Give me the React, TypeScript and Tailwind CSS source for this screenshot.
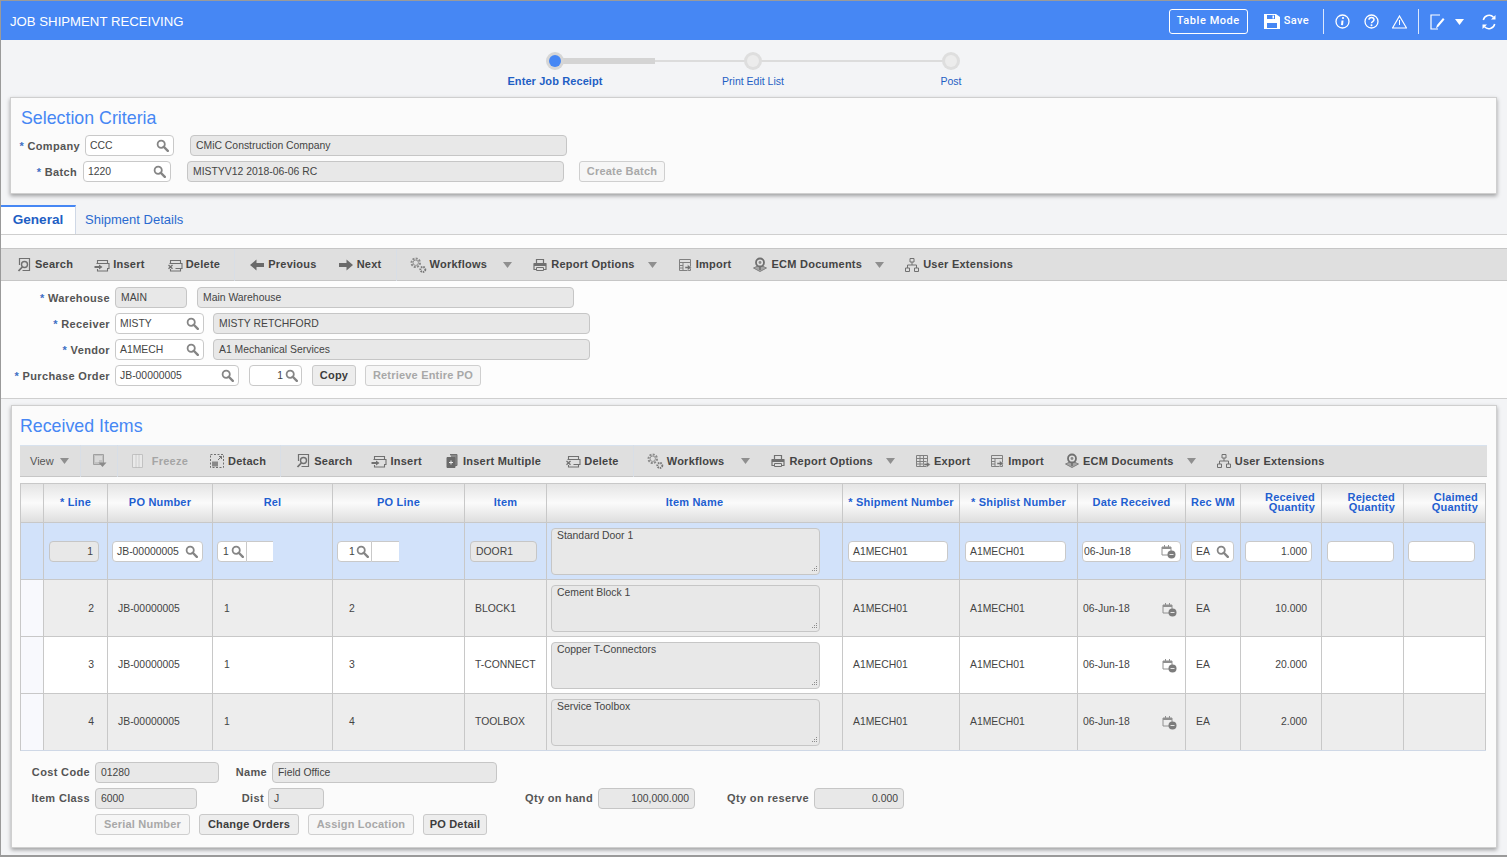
import type { ReactNode } from "react";

const ic = "shrink-0";

function Mag({ className = "" }: { className?: string }) {
  return (
    <svg width="13" height="13" viewBox="0 0 13 13" fill="none" stroke="#858585" className={`${ic} ${className}`}>
      <circle cx="5.2" cy="5.2" r="3.6" strokeWidth="1.8" />
      <path d="M8 8l3.8 3.8" strokeWidth="2.4" strokeLinecap="round" />
    </svg>
  );
}

function Caret({ light = false }: { light?: boolean }) {
  return (
    <svg width="9" height="6" viewBox="0 0 9 6" className={ic}>
      <path d="M0 0h9L4.5 6z" fill={light ? "#ffffff" : "#8f8f8f"} />
    </svg>
  );
}

function Tool({ children, size = 16 }: { children: ReactNode; size?: number }) {
  return (
    <svg width={size} height={size} viewBox="0 0 16 16" fill="none" stroke="#707070" strokeWidth="1" className={ic}>
      {children}
    </svg>
  );
}

const toolIcons: Record<string, ReactNode> = {
  search: (
    <>
      <path d="M3.5 8V1.500h10v12h-7" strokeWidth="1.200" />
      <circle cx="8.500" cy="7.500" r="3" strokeWidth="1.400" />
      <path d="M6.300 10l-3.800 4" strokeWidth="1.800" />
    </>
  ),
  insert: (
    <>
      <path d="M3.500 6V3.500h10V6M2.500 6.500h12.500v5h-2M3.500 12v2h10v-2" strokeWidth="1.100" />
      <path d="M0.500 10h6" strokeWidth="2" />
      <path d="M5 7.500L8.500 10 5 12.500z" fill="#707070" stroke="none" />
    </>
  ),
  del: (
    <>
      <path d="M3.500 6V3.500h10V6M2.500 6.500h12.500v5H8.500M3.500 12v2h10v-2" strokeWidth="1.100" />
      <path d="M1.500 8l4 3.800M5.500 8l-4 3.800" strokeWidth="1.300" />
    </>
  ),
  prev: <path d="M1 8l6.500-5.500V6H15v4H7.500v3.500z" fill="#6a6a6a" stroke="none" />,
  next: <path d="M15 8L8.500 2.500V6H1v4h7.500v3.500z" fill="#6a6a6a" stroke="none" />,
  workflows: (
    <>
      <circle cx="6" cy="6" r="3.800" stroke="#8a8a8a" strokeWidth="1.800" strokeDasharray="1.800 1.100" />
      <circle cx="6" cy="6" r="2.400" stroke="#8a8a8a" strokeWidth="0.800" />
      <circle cx="12.300" cy="12" r="2.200" stroke="#777" strokeWidth="1.700" strokeDasharray="1.300 0.800" />
    </>
  ),
  report: (
    <>
      <path d="M4.500 6V2.500h7V6" strokeWidth="1.200" />
      <path d="M2 6.500h12v6H2z" fill="#dfdfdf" strokeWidth="1.200" strokeLinejoin="round" />
      <path d="M2 8h12" strokeWidth="2" />
      <path d="M4.500 10.500h7v3h-7z" fill="#dfdfdf" />
    </>
  ),
  import: (
    <>
      <path d="M2.500 2.500h11v11h-11z" stroke="#808080" />
      <path d="M2.500 5.500h11M6 5.500v8M2.500 8.500h3.500M2.500 11h3.500" stroke="#808080" />
      <path d="M8 9.500h2.500V7.500l4 3-4 3v-2H8z" fill="#707070" stroke="#dfdfdf" strokeWidth="0.500" />
    </>
  ),
  ecm: (
    <>
      <path d="M1.500 11l6.500-3 6.500 3-6.500 3.500z" fill="#a5a5a5" stroke="#808080" />
      <circle cx="8" cy="5.500" r="4" fill="#dfdfdf" stroke="#6f6f6f" strokeWidth="1.800" />
      <circle cx="8" cy="5.500" r="1.400" fill="#888" stroke="none" />
      <path d="M8 9.500v3.500" strokeWidth="1.600" />
    </>
  ),
  user: (
    <>
      <path d="M6 1.500h4v3.500H6zM1.500 11h4v3.500h-4zM10.500 11h4v3.500h-4z" />
      <path d="M8 5v3M3.500 11V8h9v3" />
    </>
  ),
  filter: (
    <>
      <path d="M2.500 1.500h10v10h-10z" fill="#c2c2c2" stroke="#a0a0a0" />
      <path d="M4 4h7M4 6h7M4 8h4" stroke="#eee" />
      <path d="M7.500 9.500h8l-4 4.500z" fill="#8a8a8a" stroke="none" />
    </>
  ),
  freeze: (
    <>
      <path d="M2.500 1.500h10v13h-10z" stroke="#c2c2c2" fill="#e9e9e9" />
      <path d="M6 1.500v13M9 1.500v13" stroke="#b5b5b5" strokeDasharray="1 1" />
    </>
  ),
  detach: (
    <>
      <path d="M1.500 1.500h13v13h-13z" strokeDasharray="2 1.500" />
      <path d="M3 8.500h6v5H3z" fill="#8a8a8a" stroke="none" />
      <path d="M9 7l3.500-3.500M10 3.500h2.500V6" />
    </>
  ),
  multiple: (
    <>
      <path d="M6 1.500h7v11h-2" fill="#8a8a8a" />
      <path d="M3 4.500h8v10H3z" fill="#6a6a6a" stroke="#6a6a6a" />
      <path d="M7 7.500v4M5 9.500h4" stroke="#eee" />
    </>
  ),
  export: (
    <>
      <path d="M1.500 2.500h11v11h-11z" stroke="#808080" />
      <path d="M1.500 5.500h11M5 2.500v11M8.500 2.500v11M1.500 8.500h11M1.500 11h11" stroke="#808080" />
      <path d="M9 10.500h2.500V8.500l4 3-4 3v-2H9z" fill="#707070" stroke="#dfdfdf" strokeWidth="0.500" />
    </>
  ),
};

function ToolItem({
  icon,
  label,
  className = "",
  off = false,
  wide = false,
}: {
  icon: string;
  label: string;
  className?: string;
  off?: boolean;
  wide?: boolean;
}) {
  return (
    <div className={`flex items-center ${wide ? "gap-[6px]" : "gap-[3px]"} ${className}`}>
      <Tool size={icon === "workflows" ? 18 : 16}>{toolIcons[icon]}</Tool>
      <span className={`text-[11px] font-bold tracking-[0.25px] ${off ? "text-[#a5a5a5]" : "text-[#444]"}`}>{label}</span>
    </div>
  );
}

function Sep({ className = "" }: { className?: string }) {
  return <div className={`h-[32px] w-px bg-[#d8dee6] ${className}`} />;
}

function Field({
  value = "",
  w,
  gray = false,
  mag = false,
  right = false,
}: {
  value?: string;
  w: string;
  gray?: boolean;
  mag?: boolean;
  right?: boolean;
}) {
  return (
    <div
      className={`flex h-[21px] shrink-0 items-center rounded-[4px] border text-[10.4px] text-[#444] ${w} ${
        gray ? "border-[#c6c6c6] bg-[#e8e8e8] px-[5px]" : "border-[#c9c9c9] bg-white px-[4px]"
      } ${right ? "justify-end" : ""}`}
    >
      <span className={mag ? "flex-1 whitespace-nowrap" : "whitespace-nowrap"}>{value}</span>
      {mag && <Mag />}
    </div>
  );
}

function Label({ text, w, req = false }: { text: string; w: string; req?: boolean }) {
  return (
    <div className={`shrink-0 whitespace-nowrap text-right text-[11px] font-bold tracking-[0.35px] text-[#555] ${w}`}>
      {req && <span className="text-[#3f6fc4]">* </span>}
      {text}
    </div>
  );
}

function Btn({ text, w, off = false }: { text: string; w: string; off?: boolean }) {
  return (
    <div
      className={`flex h-[21px] shrink-0 items-center justify-center rounded-[3px] border text-[11px] font-bold tracking-[0.2px] ${w} ${
        off ? "border-[#cfcfcf] bg-[#f6f6f6] text-[#a8a8a8]" : "border-[#c9c9c9] bg-[#ededed] text-[#3c3c3c]"
      }`}
    >
      {text}
    </div>
  );
}

function CalClock() {
  return (
    <svg width="15" height="15" viewBox="0 0 15 15" className={ic}>
      <path d="M1 3h9v8H1z" fill="none" stroke="#909090" />
      <path d="M1 3h9v2H1zM3 1h1v2.500H3zM7 1h1v2.500H7z" fill="#909090" />
      <circle cx="10.500" cy="10.500" r="4" fill="#7c7c7c" />
      <path d="M8.500 10.500h4" fill="none" stroke="#e6e6e6" />
    </svg>
  );
}

function NameBox({ text }: { text: string }) {
  return (
    <div className="relative ml-[4px] h-[47px] w-[269px] rounded-[4px] border border-[#c6c6c6] bg-[#e8e8e8] px-[5px] text-[10.4px] leading-[13px] text-[#444]">
      {text}
      <svg width="8" height="8" viewBox="0 0 8 8" className="absolute bottom-[1px] right-[1px]">
        <path d="M6 1h1v1H6zM4 3h1v1H4zM6 3h1v1H6zM2 5h1v1H2zM4 5h1v1H4zM6 5h1v1H6z" fill="#8c8c8c" />
      </svg>
    </div>
  );
}

const cols =
  "grid grid-cols-[23px_64px_105px_120px_132px_82px_296px_117px_118px_108px_55px_81px_82px_82px]";
const cell = "flex items-center border-r border-[#c8c8c8]";

const headers: { t: string; c?: string }[] = [
  { t: "" },
  { t: "* Line" },
  { t: "PO Number" },
  { t: "Rel" },
  { t: "PO Line" },
  { t: "Item" },
  { t: "Item Name" },
  { t: "* Shipment Number" },
  { t: "* Shiplist Number" },
  { t: "Date Received" },
  { t: "Rec WM" },
  { t: "Received Quantity", c: "justify-end pr-[6px] text-right" },
  { t: "Rejected Quantity", c: "justify-end pr-[8px] text-right" },
  { t: "Claimed Quantity", c: "justify-end pr-[7px] text-right" },
];

const rows = [
  { line: "2", item: "BLOCK1", name: "Cement Block 1", qty: "10.000", bg: "bg-[#ededed] [&>div]:pt-[2px]" },
  { line: "3", item: "T-CONNECT", name: "Copper T-Connectors", qty: "20.000", bg: "bg-white" },
  { line: "4", item: "TOOLBOX", name: "Service Toolbox", qty: "2.000", bg: "bg-[#ededed]" },
];

export default function App() {
  return (
    <div className="flex h-[857px] w-[1507px] flex-col overflow-hidden border-b-2 border-l border-t border-[#9a9a9a] bg-[#f3f4f6] font-['Liberation_Sans',Arial,sans-serif]">
      {/* header */}
      <div className="flex h-[39px] shrink-0 items-center bg-[#4687f4] pl-[9px] pt-[2px] text-white">
        <div className="text-[13.2px]">JOB SHIPMENT RECEIVING</div>
        <div className="ml-auto flex items-center pr-[10px]">
          <div className="flex h-[25px] w-[79px] items-center justify-center rounded-[3px] border border-white font-['Roboto',sans-serif] text-[11px] font-medium tracking-[0.55px]">
            Table Mode
          </div>
          <svg width="16" height="15" viewBox="0 0 16 15" className="ml-[16px]">
            <path d="M0 0h12l4 3v12H0z" fill="#fff" />
            <path d="M3 1h8v4H3z" fill="#4687f4" />
            <path d="M8.500 1.500h1.500v3H8.500z" fill="#fff" />
            <path d="M3 9h10v5H3z" fill="#4687f4" />
          </svg>
          <span className="ml-[4px] font-['Roboto',sans-serif] text-[11px] font-medium tracking-[0.35px]">Save</span>
          <div className="ml-[14px] h-[25px] w-px bg-white/80" />
          <svg width="15" height="15" viewBox="0 0 15 15" className="ml-[11px]" fill="none" stroke="#fff">
            <circle cx="7.500" cy="7.500" r="6.500" strokeWidth="1.300" />
            <path d="M7.500 6.500L7 11.200" strokeWidth="2" />
            <circle cx="8" cy="4" r="1.100" fill="#fff" stroke="none" />
          </svg>
          <svg width="15" height="15" viewBox="0 0 15 15" className="ml-[14px]" fill="none" stroke="#fff">
            <circle cx="7.500" cy="7.500" r="6.500" strokeWidth="1.300" />
            <path d="M5 5.800c0-3.200 5-3.200 5 0 0 1.800-2.500 1.700-2.500 3.400" strokeWidth="1.500" />
            <circle cx="7.500" cy="11.200" r="1" fill="#fff" stroke="none" />
          </svg>
          <svg width="15" height="14" viewBox="0 0 15 14" className="ml-[13px]" fill="none" stroke="#fff">
            <path d="M7.500 1L14.500 13H.5z" strokeWidth="1.200" />
            <path d="M7.500 5v5" strokeWidth="1" />
          </svg>
          <div className="ml-[11px] h-[25px] w-px bg-white/80" />
          <svg width="15" height="16" viewBox="0 0 15 16" className="ml-[11px]" fill="none" stroke="#fff">
            <path d="M10 1H1v14h7" strokeWidth="1.200" />
            <path d="M6 14.500l1-3.500 6-7 1.500 1.500-6 7z" fill="#fff" stroke="none" />
          </svg>
          <div className="ml-[10px]">
            <Caret light />
          </div>
          <svg width="16" height="16" viewBox="0 0 16 16" className="ml-[17px]" fill="none" stroke="#fff" strokeWidth="1.500">
            <path d="M2.300 6A6 6 0 0 1 12.500 3.200M13.700 10A6 6 0 0 1 3.500 12.800" />
            <path d="M14.500 1v4.500H10z M1.500 15v-4.500H6z" fill="#fff" stroke="none" />
          </svg>
        </div>
      </div>

      {/* train stops */}
      <div className="flex h-[57px] shrink-0 justify-center pr-[2px] pt-[12px]">
        <div className="relative flex w-[594px] justify-between">
          <div className="absolute left-[99px] right-[99px] top-[8px] h-[2px] bg-[#dcdcdc]" />
          <div className="absolute left-[99px] top-[6px] h-[6px] w-[100px] bg-[#d4d4d4]" />
          {[
            { t: "Enter Job Receipt", on: true },
            { t: "Print Edit List", on: false },
            { t: "Post", on: false },
          ].map((s) => (
            <div key={s.t} className="relative flex w-[198px] flex-col items-center">
              <div
                className={`flex h-[18px] w-[18px] items-center justify-center rounded-full ${
                  s.on ? "bg-[#d6d6d6]" : "bg-[#dedede]"
                }`}
              >
                <div className={`h-[12px] w-[12px] rounded-full ${s.on ? "bg-[#4687f4]" : "bg-[#ececec]"}`} />
              </div>
              <div className={`text-[#1f5fc4] ${s.on ? "mt-[3px] text-[11px] font-bold tracking-[0.1px]" : "mt-[4px] text-[10.5px]"}`}>
                {s.t}
              </div>
            </div>
          ))}
        </div>
      </div>

      {/* selection criteria */}
      <div className="ml-[9px] mr-[10px] h-[97px] shrink-0 border border-[#cfcfcf] bg-[#fbfbfb] shadow-[0_2px_4px_rgba(0,0,0,0.35)]">
        <div className="pl-[10px] pt-[10px] text-[17.8px] leading-[21px] text-[#4687f4]">Selection Criteria</div>
        <div className="mt-[6px] flex items-center">
          <Label text="Company" w="w-[69px] pt-[2px]" req />
          <div className="ml-[5px]">
            <Field w="w-[89px]" value="CCC" mag />
          </div>
          <div className="ml-[16px]">
            <Field w="w-[377px]" value="CMiC Construction Company" gray />
          </div>
        </div>
        <div className="mt-[5px] flex items-center">
          <Label text="Batch" w="w-[66px] pt-[2px]" req />
          <div className="ml-[6px]">
            <Field w="w-[88px]" value="1220" mag />
          </div>
          <div className="ml-[16px]">
            <Field w="w-[377px]" value="MISTYV12 2018-06-06 RC" gray />
          </div>
          <Btn text="Create Batch" w="ml-[15px] w-[86px]" off />
        </div>
      </div>

      {/* tabs */}
      <div className="mt-[11px] flex h-[30px] shrink-0 border-b border-[#cfcfcf]">
        <div className="flex w-[75px] items-center justify-center border-r border-t-2 border-r-[#cfd8e6] border-t-[#4687f4] bg-white text-[13.6px] font-bold text-[#1f5fc4]">
          General
        </div>
        <div className="ml-[9px] flex items-center text-[13px] text-[#2a6ad0]">Shipment Details</div>
      </div>

      {/* general tab */}
      <div className="h-[164px] shrink-0 border-b border-[#cfcfcf] bg-[#fdfdfd] pt-[13px]">
        <div className="flex h-[33px] items-center border-y border-[#c6c6c6] bg-[#dfdfdf] pl-[15px]">
          <ToolItem icon="search" label="Search" />
          <ToolItem icon="insert" label="Insert" className="ml-[21px]" />
          <ToolItem icon="del" label="Delete" className="ml-[22px]" />
          <Sep className="ml-[14px]" />
          <ToolItem icon="prev" label="Previous" className="ml-[14px]" />
          <ToolItem icon="next" label="Next" className="ml-[21px]" />
          <Sep className="ml-[14px]" />
          <ToolItem icon="workflows" label="Workflows" className="ml-[12px]" />
          <div className="ml-[16px]">
            <Caret />
          </div>
          <ToolItem icon="report" label="Report Options" className="ml-[20px]" />
          <div className="ml-[13px]">
            <Caret />
          </div>
          <ToolItem icon="import" label="Import" className="ml-[20px]" />
          <ToolItem icon="ecm" label="ECM Documents" className="ml-[21px]" />
          <div className="ml-[13px]">
            <Caret />
          </div>
          <ToolItem icon="user" label="User Extensions" className="ml-[20px]" />
        </div>
        <div className="flex flex-col gap-[5px] pt-[6px]">
          <div className="flex items-center gap-[5px]">
            <Label text="Warehouse" w="w-[109px] pt-[2px]" req />
            <Field w="w-[72px]" value="MAIN" gray />
            <div className="ml-[5px]">
              <Field w="w-[377px]" value="Main Warehouse" gray />
            </div>
          </div>
          <div className="flex items-center gap-[5px]">
            <Label text="Receiver" w="w-[109px] pt-[2px]" req />
            <Field w="w-[89px]" value="MISTY" mag />
            <div className="ml-[4px]">
              <Field w="w-[377px]" value="MISTY RETCHFORD" gray />
            </div>
          </div>
          <div className="flex items-center gap-[5px]">
            <Label text="Vendor" w="w-[109px] pt-[2px]" req />
            <Field w="w-[89px]" value="A1MECH" mag />
            <div className="ml-[4px]">
              <Field w="w-[377px]" value="A1 Mechanical Services" gray />
            </div>
          </div>
          <div className="flex items-center gap-[5px]">
            <Label text="Purchase Order" w="w-[109px] pt-[2px]" req />
            <Field w="w-[124px]" value="JB-00000005" mag />
            <div className="ml-[5px] flex h-[21px] w-[53px] items-center justify-end gap-[2px] rounded-[4px] border border-[#c9c9c9] bg-white pr-[3px] text-[10.4px] text-[#444]">
              1
              <Mag />
            </div>
            <Btn text="Copy" w="ml-[5px] w-[44px]" />
            <Btn text="Retrieve Entire PO" w="ml-[4px] w-[116px]" off />
          </div>
        </div>
      </div>

      {/* received items */}
      <div className="ml-[10px] mr-[10px] mt-[6px] h-[443px] shrink-0 border border-[#cfcfcf] bg-[#fbfbfb] pl-[8px] pr-[9px] shadow-[0_2px_4px_rgba(0,0,0,0.35)]">
        <div className="pt-[10px] text-[17.8px] leading-[21px] text-[#4687f4]">Received Items</div>
        <div className="mt-[8px] flex h-[32px] items-center border-b border-t border-b-[#c6c6c6] border-t-[#d8e2ee] bg-[#dfdfdf] pl-[10px]">
          <span className="text-[11px] text-[#555]">View</span>
          <div className="ml-[6px]">
            <Caret />
          </div>
          <Sep className="ml-[11px]" />
          <div className="ml-[10px]">
            <Tool>{toolIcons.filter}</Tool>
          </div>
          <Sep className="ml-[10px]" />
          <ToolItem icon="freeze" label="Freeze" className="ml-[12px]" off wide />
          <ToolItem icon="detach" label="Detach" className="ml-[21px]" />
          <Sep className="ml-[14px]" />
          <ToolItem icon="search" label="Search" className="ml-[14px]" />
          <ToolItem icon="insert" label="Insert" className="ml-[19px]" />
          <ToolItem icon="multiple" label="Insert Multiple" className="ml-[22px]" />
          <ToolItem icon="del" label="Delete" className="ml-[24px]" />
          <Sep className="ml-[14px]" />
          <ToolItem icon="workflows" label="Workflows" className="ml-[12px]" />
          <div className="ml-[17px]">
            <Caret />
          </div>
          <ToolItem icon="report" label="Report Options" className="ml-[20px]" />
          <div className="ml-[13px]">
            <Caret />
          </div>
          <ToolItem icon="export" label="Export" className="ml-[20px]" />
          <ToolItem icon="import" label="Import" className="ml-[19px]" />
          <ToolItem icon="ecm" label="ECM Documents" className="ml-[20px]" />
          <div className="ml-[13px]">
            <Caret />
          </div>
          <ToolItem icon="user" label="User Extensions" className="ml-[20px]" />
        </div>

        {/* grid */}
        <div className="mt-[6px] w-[1466px] border-b border-l border-t border-b-[#cfd8e6] border-l-[#c8c8c8] border-t-[#c8c8c8] text-[10.4px] text-[#444]">
          <div className={`${cols} h-[39px] border-b border-[#c8c8c8] bg-linear-to-b from-[#e4e4e4] via-[#fbfbfb] to-[#dedede]`}>
            {headers.map((h, i) => (
              <div
                key={i}
                className={`${cell} pb-[2px] text-[11px] font-bold leading-[10px] tracking-[0.2px] text-[#1f5fd0] ${h.c ?? "justify-center text-center"}`}
              >
                {h.t}
              </div>
            ))}
          </div>

          <div className={`${cols} h-[57px] border-b border-[#c8c8c8] bg-[#d2e2fa] [&_span]:pt-[2px]`}>
            <div className={cell} />
            <div className={`${cell} pl-[5px]`}>
              <Field w="w-[50px]" value="1" gray right />
            </div>
            <div className={`${cell} pl-[4px]`}>
              <Field w="w-[91px]" value="JB-00000005" mag />
            </div>
            <div className={`${cell} pl-[4px]`}>
              <div className="flex h-[21px] w-[30px] items-center justify-between rounded-l-[4px] border border-[#c9c9c9] bg-white pl-[5px] pr-[2px]">
                <span>1</span>
                <Mag />
              </div>
              <div className="h-[21px] w-[26px] border-y border-[#c9c9c9] bg-white" />
            </div>
            <div className={`${cell} pl-[4px]`}>
              <div className="flex h-[21px] w-[35px] items-center justify-between rounded-l-[4px] border border-[#c9c9c9] bg-white pl-[11px] pr-[2px]">
                <span>1</span>
                <Mag />
              </div>
              <div className="h-[21px] w-[27px] border-y border-[#c9c9c9] bg-white" />
            </div>
            <div className={`${cell} pl-[5px]`}>
              <Field w="w-[67px]" value="DOOR1" gray />
            </div>
            <div className={cell}>
              <NameBox text="Standard Door 1" />
            </div>
            <div className={`${cell} pl-[5px]`}>
              <Field w="w-[100px]" value="A1MECH01" />
            </div>
            <div className={`${cell} pl-[5px]`}>
              <Field w="w-[101px]" value="A1MECH01" />
            </div>
            <div className={`${cell} pl-[4px]`}>
              <div className="flex h-[21px] w-[99px] items-center justify-between rounded-[4px] border border-[#c9c9c9] bg-white pl-[1px] pr-[4px]">
                <span>06-Jun-18</span>
                <CalClock />
              </div>
            </div>
            <div className={`${cell} pl-[5px]`}>
              <Field w="w-[43px]" value="EA" mag />
            </div>
            <div className={`${cell} pl-[4px]`}>
              <Field w="w-[67px]" value="1.000" right />
            </div>
            <div className={`${cell} pl-[5px]`}>
              <Field w="w-[67px]" />
            </div>
            <div className={`${cell} pl-[4px]`}>
              <Field w="w-[67px]" />
            </div>
          </div>

          {rows.map((r) => (
            <div key={r.line} className={`${cols} h-[57px] border-b border-[#c8c8c8] last:h-[56px] last:border-b-0 ${r.bg}`}>
              <div className={`${cell} bg-[#f8f9fd]`} />
              <div className={`${cell} justify-end pr-[13px]`}>{r.line}</div>
              <div className={`${cell} pl-[10px]`}>JB-00000005</div>
              <div className={`${cell} pl-[11px]`}>1</div>
              <div className={`${cell} pl-[16px]`}>{r.line}</div>
              <div className={`${cell} pl-[10px]`}>{r.item}</div>
              <div className={`${cell} !pt-0`}>
                <NameBox text={r.name} />
              </div>
              <div className={`${cell} pl-[10px]`}>A1MECH01</div>
              <div className={`${cell} pl-[10px]`}>A1MECH01</div>
              <div className={`${cell} justify-between pl-[5px] pr-[8px]`}>
                06-Jun-18
                <CalClock />
              </div>
              <div className={`${cell} pl-[10px]`}>EA</div>
              <div className={`${cell} justify-end pr-[14px]`}>{r.qty}</div>
              <div className={cell} />
              <div className={cell} />
            </div>
          ))}
        </div>

        {/* detail fields */}
        <div className="mt-[11px] flex flex-col gap-[5px]">
          <div className="flex items-center">
            <Label text="Cost Code" w="w-[70px]" />
            <div className="ml-[5px]">
              <Field w="w-[124px]" value="01280" gray />
            </div>
            <Label text="Name" w="w-[48px]" />
            <div className="ml-[5px]">
              <Field w="w-[225px]" value="Field Office" gray />
            </div>
          </div>
          <div className="flex items-center">
            <Label text="Item Class" w="w-[70px]" />
            <div className="ml-[5px]">
              <Field w="w-[102px]" value="6000" gray />
            </div>
            <Label text="Dist" w="w-[67px]" />
            <div className="ml-[4px]">
              <Field w="w-[56px]" value="J" gray />
            </div>
            <Label text="Qty on hand" w="w-[269px]" />
            <div className="ml-[5px]">
              <Field w="w-[97px]" value="100,000.000" gray right />
            </div>
            <Label text="Qty on reserve" w="w-[114px]" />
            <div className="ml-[5px]">
              <Field w="w-[90px]" value="0.000" gray right />
            </div>
          </div>
          <div className="flex items-center pl-[75px]">
            <Btn text="Serial Number" w="w-[95px]" off />
            <Btn text="Change Orders" w="ml-[9px] w-[100px]" />
            <Btn text="Assign Location" w="ml-[9px] w-[106px]" off />
            <Btn text="PO Detail" w="ml-[9px] w-[64px]" />
          </div>
        </div>
      </div>
    </div>
  );
}
